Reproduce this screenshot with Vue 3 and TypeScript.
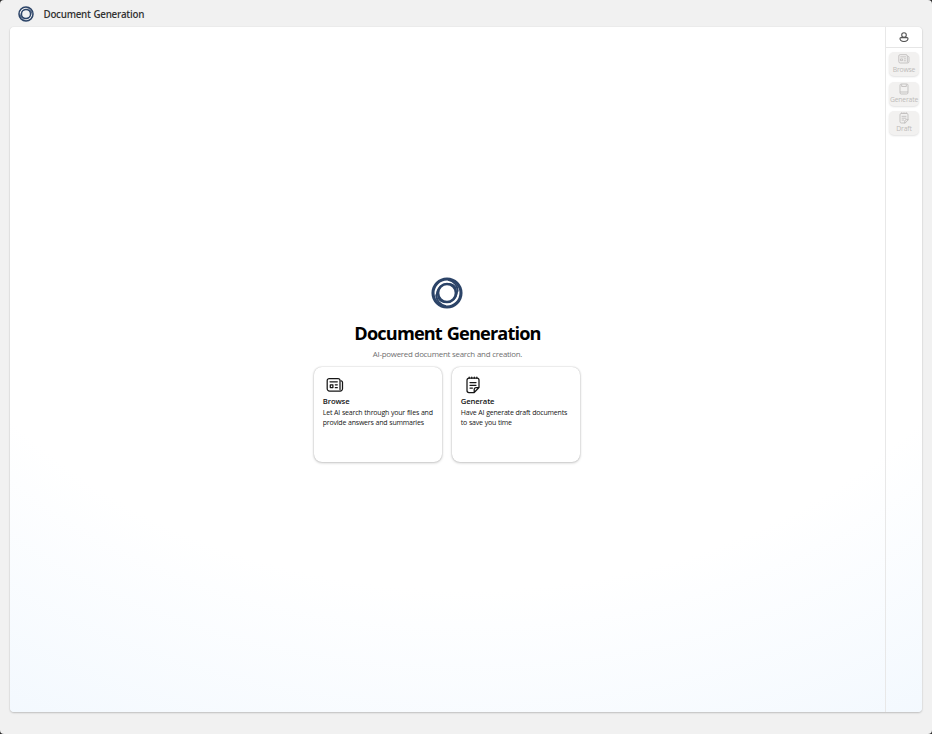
<script setup lang="ts">
type IconName = 'news' | 'notebook' | 'notepad'

interface NavItem {
  label: string
  icon: IconName
}

interface Card {
  title: string
  lines: string[]
  icon: IconName
  key: string
}

const navItems: NavItem[] = [
  { label: 'Browse', icon: 'news' },
  { label: 'Generate', icon: 'notebook' },
  { label: 'Draft', icon: 'notepad' },
]

const cards: Card[] = [
  { key: 'browse', title: 'Browse', icon: 'news', lines: ['Let AI search through your files and', 'provide answers and summaries'] },
  { key: 'generate', title: 'Generate', icon: 'notepad', lines: ['Have AI generate draft documents', 'to save you time'] },
]
</script>

<template>
  <div class="shell">
    <svg class="defs" width="0" height="0" aria-hidden="true">
      <symbol id="logo" viewBox="0 0 32 32">
        <g fill="none" stroke="#2c4468">
          <circle cx="16" cy="16" r="14" stroke-width="3.100" />
          <circle cx="16" cy="16" r="9" stroke-width="2.700" />
          <path d="M6.500 23C3.500 14 9.500 6.200 18 6.800C21.500 7.100 24 9 25 11.500" stroke-width="1.500" />
          <path d="M25.500 9C28.500 18 22.500 25.800 14 25.200C10.500 24.900 8 23 7 20.500" stroke-width="1.500" />
          <path d="M17 3C22.500 4 27 8.500 27 14.500" stroke-width="1.500" />
          <path d="M15 29C9.500 28 5 23.500 5 17.500" stroke-width="1.500" />
        </g>
      </symbol>
      <symbol id="news" viewBox="0 0 18 16">
        <g fill="none" stroke="currentColor" stroke-width="1.250" stroke-linecap="round" stroke-linejoin="round">
          <path d="M14 12.500V3.500a2 2 0 0 0-2-2H3.200a2 2 0 0 0-2 2v8.200a2.300 2.300 0 0 0 2.300 2.300h10.700a2.300 2.300 0 0 0 2.300-2.300V5.300a1.500 1.500 0 0 0-1.200-1.400" />
          <path d="M4 4.800h7.300M9.300 7.800h2M9.300 10.700h2M4.300 7.900h2.600v2.600H4.300z" />
        </g>
      </symbol>
      <symbol id="notebook" viewBox="0 0 16 18">
        <g fill="none" stroke="currentColor" stroke-width="1.250" stroke-linejoin="round">
          <rect x="2" y="1.500" width="12" height="15" rx="2" />
          <path d="M4.500 2v3.200h7V2M2 13.500h12" />
        </g>
      </symbol>
      <symbol id="notepad" viewBox="0 0 16 18">
        <g fill="none" stroke="currentColor" stroke-width="1.250" stroke-linecap="round" stroke-linejoin="round">
          <path d="M14 11.500V4.200a2 2 0 0 0-2-2H4a2 2 0 0 0-2 2v10.300a2 2 0 0 0 2 2h5.200zM14 11.500h-2.800a2 2 0 0 0-2 2v3" />
          <path d="M4.200 1.200v1M6.750 1.200v1M9.300 1.200v1M11.850 1.200v1M5 6.500h6M5 9.300h6M5 12.100h2.400" />
        </g>
      </symbol>
    </svg>

    <header class="header">
      <svg class="header-logo"><use href="#logo" /></svg>
      <span class="header-title">Document Generation</span>
    </header>

    <div class="panel">
      <main class="content">
        <svg class="hero-logo"><use href="#logo" /></svg>
        <h1 class="title">Document Generation</h1>
        <p class="subtitle">AI-powered document search and creation.</p>
        <div class="cards">
          <button v-for="card in cards" :key="card.key" class="card">
            <svg class="card-icon"><use :href="'#' + card.icon" /></svg>
            <span class="card-title">{{ card.title }}</span>
            <span v-for="line in card.lines" :key="line" class="card-line">{{ line }}</span>
          </button>
        </div>
      </main>

      <aside class="sidebar">
        <div class="account">
          <svg class="account-icon" viewBox="0 0 10 10" fill="none" stroke="#555" stroke-width="1.100">
            <circle cx="5" cy="3" r="2.300" />
            <path d="M3.200 5.600H2a1 1 0 0 0-1 1C1 8.600 2.500 9.500 5 9.500s4-.9 4-2.900a1 1 0 0 0-1-1H6.800M3.200 5.600h3.600" />
          </svg>
        </div>
        <nav class="nav">
          <button v-for="item in navItems" :key="item.label" class="nav-item" disabled>
            <svg class="nav-icon"><use :href="'#' + item.icon" /></svg>
            <span class="nav-label">{{ item.label }}</span>
          </button>
        </nav>
      </aside>
    </div>
  </div>
</template>

<style>
body {
  background: #2a2a2a;
}
</style>

<style scoped>
.shell {
  box-sizing: border-box;
  width: 932px;
  height: 734px;
  padding: 0 10px 22px;
  display: flex;
  flex-direction: column;
  background: #f1f1f1;
  border-radius: 4px;
  overflow: hidden;
  font-family: "Open Sans", "Noto Sans", sans-serif;
}
.defs {
  position: absolute;
}
.header {
  height: 27px;
  flex: none;
  display: flex;
  align-items: center;
  padding-left: 8px;
}
.header-logo {
  width: 16px;
  height: 16px;
}
.header-title {
  margin: 2px 0 0 9.500px;
  font-size: 9.800px;
  line-height: 14px;
  font-weight: 600;
  letter-spacing: -0.270px;
  word-spacing: 0.500px;
  color: #333;
  white-space: nowrap;
}
.panel {
  flex: 1;
  min-height: 0;
  display: flex;
  border-radius: 4px;
  overflow: hidden;
  background: radial-gradient(108.780% 108.780% at 50.020% 19.780%, #fff 57.290%, #eef6fe 100%);
  box-shadow: 0 1px 2px rgba(0, 0, 0, 0.2), 0 0 1px rgba(0, 0, 0, 0.16);
}
.content {
  flex: 1;
  display: flex;
  flex-direction: column;
  align-items: center;
  padding-top: 250px;
}
.hero-logo {
  flex: none;
  width: 32px;
  height: 32px;
  margin-right: 1px;
}
.title {
  margin: 11px 0 0;
  font-size: 18.200px;
  line-height: 26px;
  font-weight: 700;
  letter-spacing: -0.860px;
  word-spacing: 1px;
  color: #000;
  white-space: nowrap;
}
.subtitle {
  margin: 3px 0 0;
  font-size: 7.900px;
  line-height: 11px;
  letter-spacing: -0.270px;
  word-spacing: 0.300px;
  color: #707070;
  white-space: nowrap;
}
.cards {
  display: flex;
  gap: 10px;
  margin-top: 7px;
  margin-right: 0.500px;
}
.card {
  box-sizing: border-box;
  width: 128px;
  height: 94.500px;
  padding: 9px 0 0 8.500px;
  display: flex;
  flex-direction: column;
  align-items: flex-start;
  border: none;
  border-radius: 8px;
  background: #fff;
  font-family: inherit;
  color: #161616;
  box-shadow: 0 1px 3px rgba(0, 0, 0, 0.2), 0 0 1.500px rgba(0, 0, 0, 0.25);
}
.card-icon {
  width: 18px;
  height: 18px;
  margin-left: 3px;
  color: #161616;
}
.card-title {
  margin-top: 2px;
  font-size: 7.700px;
  line-height: 11px;
  font-weight: 600;
  letter-spacing: -0.120px;
}
.card-title + .card-line {
  margin-top: 1px;
}
.card-line {
  font-size: 7px;
  line-height: 10px;
  letter-spacing: -0.210px;
  word-spacing: 0.300px;
  white-space: nowrap;
}
.sidebar {
  width: 36px;
  border-left: 1px solid #e8e8e8;
}
.account {
  height: 20px;
  display: flex;
  align-items: center;
  justify-content: center;
  border-bottom: 1px solid #e6e6e6;
}
.account-icon {
  width: 10px;
  height: 10px;
}
.nav {
  display: flex;
  flex-direction: column;
  align-items: center;
  gap: 5.500px;
  padding-top: 4px;
}
.nav-item {
  width: 30px;
  height: 24px;
  padding: 1px 0 0;
  display: flex;
  flex-direction: column;
  align-items: center;
  border: none;
  border-radius: 5px;
  background: #f2f1f0;
  color: #bdbbb9;
  font-family: inherit;
  box-shadow: 0 1px 2px rgba(0, 0, 0, 0.12);
}
.nav-icon {
  flex: none;
  width: 12px;
  height: 12px;
}
.nav-label {
  font-size: 6.800px;
  line-height: 10px;
  letter-spacing: -0.180px;
  white-space: nowrap;
}
</style>
